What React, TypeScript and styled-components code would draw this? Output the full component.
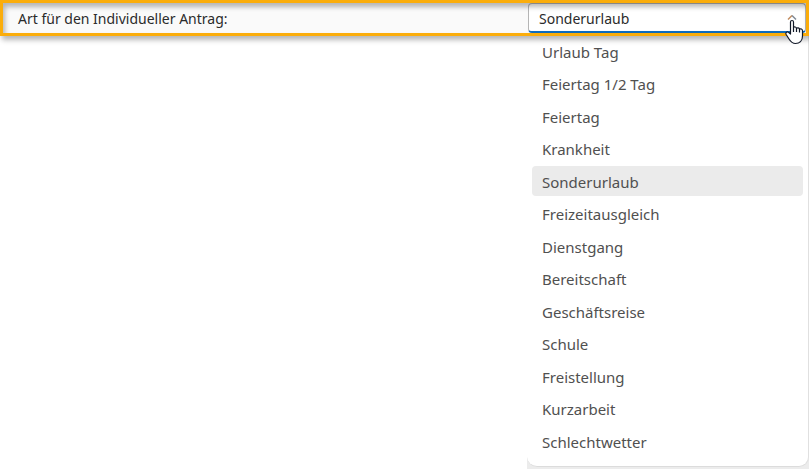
import React, { useState } from "react";
import styled, { createGlobalStyle } from "styled-components";

const GlobalStyle = createGlobalStyle`
  *, *::before, *::after { box-sizing: border-box; }
  body {
    margin: 0;
    background: #fff;
    font-family: "Noto Sans", "Open Sans", sans-serif;
    overflow: hidden;
  }
`;

const Page = styled.main`
  position: relative;
`;

const FieldRow = styled.div`
  position: relative;
  z-index: 1;
  display: grid;
  grid-template-columns: minmax(0, 1fr) 278px;
  height: 36px;
  padding: 3px;
  background: #fafafa;
  box-shadow: 2px 4px 5px rgba(0, 0, 0, 0.28);

  /* highlight frame, drawn over the field */
  &::after {
    content: "";
    position: absolute;
    inset: 0;
    border: 3px solid #fbad0b;
    box-shadow: inset 2px 4px 5px rgba(0, 0, 0, 0.28);
    pointer-events: none;
  }
`;

const Label = styled.label`
  padding-left: 15px;
  font-size: 14px;
  line-height: 31px;
  color: #2b2b2b;
  white-space: nowrap;
`;

const SelectBox = styled.div`
  position: relative;
  height: 30px;
  border: 1px solid #b5b5b5;
  border-bottom: 2px solid #0f6cbd;
  border-radius: 4px;
  background: #fff;
`;

const Select = styled.select`
  appearance: none;
  display: block;
  width: 100%;
  height: 28px;
  padding: 1px 28px 0 10px;
  border: 0;
  outline: 0;
  background: transparent;
  color: #2b2b2b;
  font-family: inherit;
  font-size: 14px;
  line-height: 27px;
`;

const Chevron = styled.svg`
  position: absolute;
  top: 9px;
  right: 8px;
  width: 10px;
  height: 10px;
  pointer-events: none;
`;

const Menu = styled.ul`
  width: 282px;
  margin: 0 0 0 auto;
  padding: 0 5px 10px;
  list-style: none;
  background: #fff;
  border-right: 1px solid #e0e0e0;
  border-bottom: 1px solid #dcdcdc;
  border-radius: 0 0 10px 10px;
`;

const MenuShade = styled.div`
  width: 282px;
  margin-left: auto;
  padding-bottom: 2px;
  background: linear-gradient(to top, #ececec 12px, #fff 12px);
`;

const Option = styled.li<{ $active: boolean }>`
  height: 30px;
  margin-bottom: 2px;
  padding-left: 10px;
  border-radius: 4px;
  background: ${(p) => (p.$active ? "#ebebeb" : "transparent")};
  color: #505050;
  font-size: 15px;
  line-height: 32px;

  &:nth-child(even) { margin-bottom: 3px; }
  &:last-child { margin-bottom: 0; }
`;

const Pointer = styled.svg`
  position: absolute;
  z-index: 2;
  top: 19px;
  right: 5px;
  width: 20px;
  height: 26px;
  pointer-events: none;
`;

const KINDS = [
  "Urlaub Tag",
  "Feiertag 1/2 Tag",
  "Feiertag",
  "Krankheit",
  "Sonderurlaub",
  "Freizeitausgleich",
  "Dienstgang",
  "Bereitschaft",
  "Geschäftsreise",
  "Schule",
  "Freistellung",
  "Kurzarbeit",
  "Schlechtwetter",
];

export default function App() {
  const [kind, setKind] = useState("Sonderurlaub");

  return (
    <Page>
      <GlobalStyle />
      <FieldRow>
        <Label htmlFor="kind">Art für den Individueller Antrag:</Label>
        <SelectBox>
          <Select id="kind" value={kind} onChange={(e) => setKind(e.target.value)}>
            {KINDS.map((k) => (
              <option key={k}>{k}</option>
            ))}
          </Select>
          <Chevron viewBox="0 0 10 10" fill="none" strokeWidth="1.5" aria-hidden="true">
            <path d="M1 6.500 5 2.500" stroke="#c08a5c" />
            <path d="m5 2.500 4 4" stroke="#7d8794" />
          </Chevron>
        </SelectBox>
      </FieldRow>
      <MenuShade>
        <Menu role="listbox" aria-label="Art">
          {KINDS.map((k) => (
            <Option
              key={k}
              role="option"
              aria-selected={k === kind}
              $active={k === kind}
              onClick={() => setKind(k)}
            >
              {k}
            </Option>
          ))}
        </Menu>
      </MenuShade>
      <Pointer viewBox="0 0 20 26" aria-hidden="true">
        <path
          d="M6.500 15V3C6.500 1 9.500 1 9.500 3V8.500C10.300 7.500 12.300 7.800 12.500 9.300 13.400 8.400 15.200 8.800 15.500 10.100 16.700 9.400 18.500 10.200 18.500 11.800V17C18.500 22 15.500 24.500 11.500 24.500 8 24.500 6.500 22.500 5 20L2 15.200C1.200 13.500 3.200 12.300 4.500 13.400Z"
          fill="#fff"
          stroke="#111827"
          strokeWidth="1.200"
          strokeLinejoin="round"
        />
        <path d="M9.500 8.500v4.500M12.500 9.300V13M15.500 10.100V13.500" stroke="#111827" strokeWidth="1.200" />
      </Pointer>
    </Page>
  );
}
